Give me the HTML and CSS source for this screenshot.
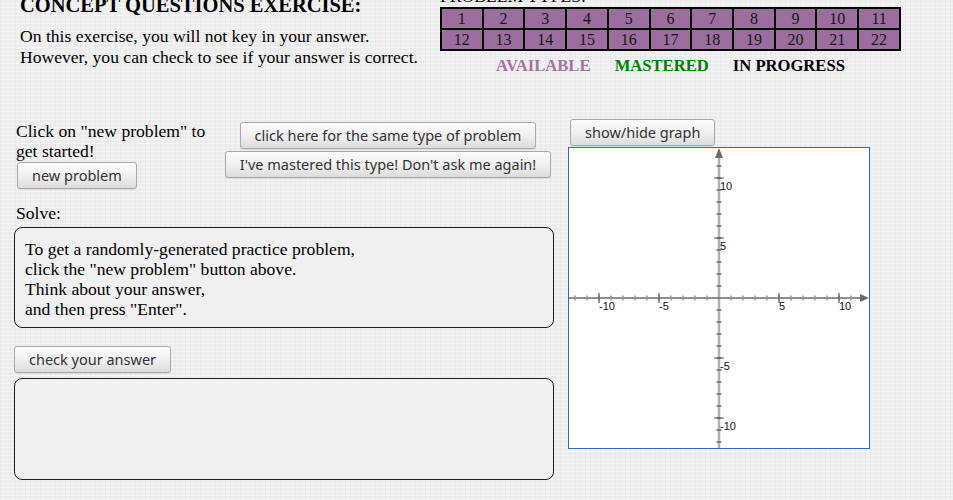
FILE: index.html
```html
<!DOCTYPE html>
<html lang="en">
<head>
  <meta charset="UTF-8" />
  <title>Concept Questions Exercise</title>
  <link rel="stylesheet" href="styles.css">
</head>
<body>
  <div class="page">
    <div class="top">
      <div class="intro">
        <h3 class="title">CONCEPT QUESTIONS EXERCISE:</h3>
        <p class="note">On this exercise, you will not key in your answer.<br>However, you can check to see if your answer is correct.</p>
      </div>
      <div class="types">
        <div class="types-label">PROBLEM TYPES:</div>
        <table class="types-grid">
          <tr>
            <td>1</td><td>2</td><td>3</td><td>4</td><td>5</td><td>6</td><td>7</td><td>8</td><td>9</td><td>10</td><td>11</td>
          </tr>
          <tr>
            <td>12</td><td>13</td><td>14</td><td>15</td><td>16</td><td>17</td><td>18</td><td>19</td><td>20</td><td>21</td><td>22</td>
          </tr>
        </table>
        <div class="legend">
          <span class="available">AVAILABLE</span>
          <span class="mastered">MASTERED</span>
          <span class="progress">IN PROGRESS</span>
        </div>
      </div>
    </div>

    <div class="work">
      <div class="left">
        <div class="controls">
          <div class="start">
            <div class="start-text">Click on "new problem" to get started!</div>
            <button class="btn new-btn">new problem</button>
          </div>
          <div class="same">
            <button class="btn">click here for the same type of problem</button>
            <button class="btn">I've mastered this type! Don't ask me again!</button>
          </div>
        </div>
        <div class="solve-label">Solve:</div>
        <div class="box problem">
          To get a randomly-generated practice problem,<br>
          click the "new problem" button above.<br>
          Think about your answer,<br>
          and then press "Enter".
        </div>
        <button class="btn check-btn">check your answer</button>
        <div class="box answer"></div>
      </div>

      <div class="right">
        <button class="btn graph-btn">show/hide graph</button>
        <div class="graph">
          <svg width="300" height="300" viewBox="0 0 300 300">
            <!-- y axis -->
            <line x1="150" y1="6" x2="150" y2="300" stroke="#b0b0b0" stroke-width="2.5"/>
            <!-- x axis -->
            <line x1="0" y1="150" x2="292" y2="150" stroke="#6a6a6a" stroke-width="1.3"/>
            <!-- minor ticks -->
            <path stroke="#9a9a9a" stroke-width="1.6" d="M6 147.5v5M18 147.5v5M30 147.5v5M42 147.5v5M54 147.5v5M66 147.5v5M78 147.5v5M90 147.5v5M102 147.5v5M114 147.5v5M126 147.5v5M138 147.5v5M162 147.5v5M174 147.5v5M186 147.5v5M198 147.5v5M210 147.5v5M222 147.5v5M234 147.5v5M246 147.5v5M258 147.5v5M270 147.5v5M282 147.5v5"/>
            <path stroke="#6a6a6a" stroke-width="1.3" d="M147.5 18h5M147.5 30h5M147.5 42h5M147.5 54h5M147.5 66h5M147.5 78h5M147.5 90h5M147.5 102h5M147.5 114h5M147.5 126h5M147.5 138h5M147.5 162h5M147.5 174h5M147.5 186h5M147.5 198h5M147.5 210h5M147.5 222h5M147.5 234h5M147.5 246h5M147.5 258h5M147.5 270h5M147.5 282h5M147.5 294h5"/>
            <!-- major ticks -->
            <path stroke="#5a5a5a" stroke-width="1.2" d="M30 145v10M90 145v10M210 145v10M270 145v10M145 30h10M145 90h10M145 210h10M145 270h10"/>
            <!-- arrows -->
            <polygon points="300,150 291,146 291,154" fill="#6a6a6a"/>
            <polygon points="150,0 146,10 154,10" fill="#6a6a6a"/>
            <!-- labels -->
            <g class="labels">
              <text x="30" y="161.5">-10</text>
              <text x="90" y="161.5">-5</text>
              <text x="210" y="161.5">5</text>
              <text x="270" y="161.5">10</text>
              <text x="151" y="41.5">10</text>
              <text x="151" y="101.5">5</text>
              <text x="151" y="221.5">-5</text>
              <text x="151" y="281.5">-10</text>
            </g>
          </svg>
        </div>
      </div>
    </div>
  </div>
</body>
</html>
```

FILE: styles.css
```css
body {
  margin: 0;
  font-family: "Liberation Serif", "Times New Roman", serif;
  font-size: 17.6px;
  color: #000;
  background-color: #eeeeee;
  background-image:
    repeating-linear-gradient(0deg, rgba(255,255,255,0.35) 0 1px, transparent 1px 4px),
    repeating-linear-gradient(90deg, rgba(0,0,0,0.025) 0 1px, transparent 1px 5px);
  overflow: hidden;
}
.page {
  margin-top: -14px;
}

/* header */
.top {
  display: flex;
}
.intro {
  width: 400px;
  padding: 7px 0 0 20px;
}
.title {
  margin: 0;
  font-size: 20.5px;
  line-height: 24px;
  font-weight: bold;
}
.note {
  margin: 9px 0 0;
  line-height: 20.5px;
}
.types {
  margin-left: 20px;
  width: 461px;
}
.types-label {
  line-height: 20px;
}
.types-grid {
  margin-top: 1px;
  width: 461px;
  table-layout: fixed;
  border-collapse: collapse;
  font-size: 16px;
}
.types-grid td {
  height: 19px;
  padding: 0;
  line-height: 19px;
  text-align: center;
  border: 2px solid #000;
  background: #9c6e9f;
  color: #161616;
}
.legend {
  margin-top: 5px;
  text-align: center;
  font-size: 16.6px;
  line-height: 20px;
  font-weight: bold;
  white-space: nowrap;
}
.legend span {
  margin: 0 10px;
}
.available { color: #a173a7; }
.mastered { color: #008000; }
.progress { color: #000; }

/* main area */
.work {
  display: flex;
  gap: 14px;
  margin-top: 43px;
  padding-left: 14px;
}
.left {
  width: 540px;
  padding-top: 2px;
}
.controls {
  display: flex;
  align-items: flex-start;
}
.start {
  width: 206px;
  padding-left: 2px;
}
.start-text {
  line-height: 20px;
}
.same {
  flex: 1;
  display: flex;
  flex-direction: column;
  align-items: center;
  gap: 2px;
  padding-top: 1px;
}

.btn {
  display: block;
  height: 27px;
  padding: 0 14px;
  font-family: "Noto Sans", "Open Sans", sans-serif;
  font-size: 14.5px;
  line-height: 25px;
  white-space: nowrap;
  color: #333;
  background: linear-gradient(180deg, #fdfdfd 0%, #f0f0f0 50%, #dcdcdc 100%);
  border: 1px solid #a9a9a9;
  border-radius: 3px;
  box-shadow: 0 1px 1px rgba(0,0,0,0.08);
  cursor: pointer;
}
.new-btn {
  margin: 1px 0 0 1px;
}
.solve-label {
  margin-top: 14px;
  padding-left: 2px;
  line-height: 20px;
}
.box {
  box-sizing: border-box;
  margin-top: 4px;
  height: 101px;
  padding: 11px 10px 8px;
  line-height: 20px;
  background: #f0f0f0;
  border: 1px solid #1e1e1e;
  border-radius: 8px;
}
.check-btn {
  margin-top: 18px;
}
.answer {
  margin-top: 5px;
  height: 102px;
}

.right {
  width: 302px;
}
.graph-btn {
  margin: 0 0 1px 2px;
}
.graph {
  width: 300px;
  height: 300px;
  background: #fff;
  border: 1px solid #3a6ba6;
}
.graph svg {
  display: block;
}
.labels text {
  font-family: "Liberation Sans", Arial, sans-serif;
  font-size: 11px;
  fill: #111;
}
```
